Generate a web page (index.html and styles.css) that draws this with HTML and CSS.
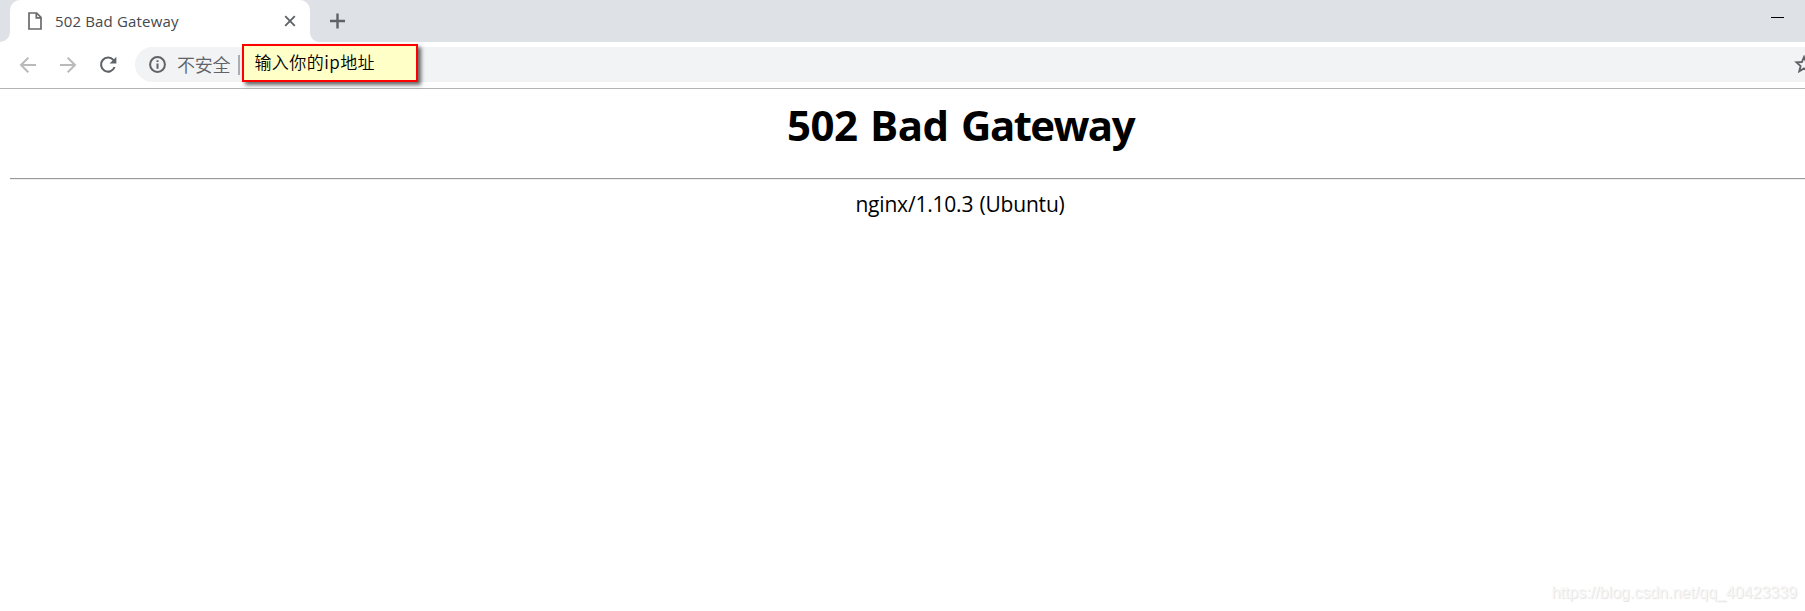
FILE: index.html
```html
<!DOCTYPE html>
<html lang="zh-CN">
<head>
<meta charset="utf-8">
<title>502 Bad Gateway</title>
<link rel="stylesheet" href="styles.css">
</head>
<body>
<header class="tabstrip">
  <div class="tab">
    <svg class="file-icon" width="14" height="18" viewBox="0 0 14 18" fill="none" stroke="#6a6a6a" stroke-width="1.7"><path d="M1 1H8.6L13 5.4V17H1ZM8.3 1V5.8H13"/></svg>
    <span class="tab-title">502 Bad Gateway</span>
    <svg class="tab-close" width="12" height="12" viewBox="0 0 12 12" stroke="#5f6368" stroke-width="1.9"><path d="M1.2 1.2L10.8 10.8M10.8 1.2L1.2 10.8"/></svg>
  </div>
  <svg class="tab-curve" width="10" height="10" viewBox="0 0 10 10"><path d="M0 0C0 6 4 10 10 10H0Z" fill="#fff"/></svg>
  <svg class="new-tab" width="15" height="16" viewBox="0 0 15 16" stroke="#5f6368" stroke-width="2.4"><path d="M7.5 .5V15.5M0 8H15"/></svg>
  <span class="minimize"></span>
</header>
<nav class="toolbar">
  <svg class="nav-icon" width="18" height="18" viewBox="0 0 18 18" fill="none" stroke="#bababa" stroke-width="2"><path d="M17 9H2.5M9.3 1.7L2 9L9.3 16.3"/></svg>
  <svg class="nav-icon" width="18" height="18" viewBox="0 0 18 18" fill="none" stroke="#bababa" stroke-width="2"><path d="M1 9H15.5M8.7 1.7L16 9L8.7 16.3"/></svg>
  <svg class="nav-icon" width="18" height="18" viewBox="0 0 18 18"><path d="M14.5 4.2A7 7 0 1 0 15.6 11" fill="none" stroke="#5f6368" stroke-width="2.1"/><path d="M17.4 .7V7.5H10.6Z" fill="#5f6368"/></svg>
  <div class="omnibox">
    <svg class="info-icon" width="17" height="17" viewBox="0 0 17 17"><circle cx="8.5" cy="8.5" r="7.4" fill="none" stroke="#5f6368" stroke-width="2"/><path d="M7.5 4.2H9.5V6.1H7.5ZM7.5 7.4H9.5V12.7H7.5Z" fill="#5f6368"/></svg>
    <span class="security">不安全</span>
    <span class="divider"></span>
    <div class="note">输入你的ip地址</div>
    <svg class="star" width="11" height="19" viewBox="0 0 11 19"><path d="M10 2L12.1 7L17.5 7.4L13.4 11L14.7 16.3L10 13.4L5.3 16.3L6.6 11L2.5 7.4L7.9 7Z" fill="none" stroke="#5f6368" stroke-width="1.9"/></svg>
  </div>
</nav>
<main class="page">
  <h1 class="title">502 Bad <span class="title-end">Gateway</span></h1>
  <hr class="rule">
  <p class="server">nginx/1.10.3 (Ubuntu)</p>
</main>
<div class="watermark">https://blog.csdn.net/qq_40423339</div>
</body>
</html>
```
FILE: styles.css
```css
* { box-sizing: border-box; }
body {
  margin: 0;
  height: 611px;
  overflow: hidden;
  background: #fff;
  font-family: "Open Sans", "Noto Sans CJK SC", sans-serif;
  display: flex;
  flex-direction: column;
  position: relative;
}
.tabstrip {
  height: 42px;
  flex: none;
  display: flex;
  background: linear-gradient(#fff, #fff) 0 100% / 10px 10px no-repeat, #dee1e6;
}
.tabstrip::before {
  content: "";
  width: 10px;
  height: 42px;
  background: #dee1e6;
  border-bottom-right-radius: 10px;
}
.tab {
  width: 300px;
  height: 42px;
  padding: 0 14px 0 18px;
  display: flex;
  align-items: center;
  background: #fff;
  border-radius: 10px 10px 0 0;
}
.file-icon { margin-right: 13px; }
.tab-title {
  font-size: 15px;
  line-height: 20px;
  letter-spacing: .16px;
  color: #45484c;
  white-space: nowrap;
}
.tab-close { margin-left: auto; }
.tab-curve { align-self: flex-end; }
.new-tab { margin: 13px 0 0 10px; }
.minimize {
  width: 13px;
  height: 1px;
  margin: 17px 21px 0 auto;
  background: #000;
}
.toolbar {
  height: 47px;
  flex: none;
  padding: 5px 0 6px 19px;
  border-bottom: 1px solid #b4b4b4;
  display: flex;
  align-items: center;
}
.nav-icon { flex: none; margin-right: 22px; }
.nav-icon:nth-of-type(3) { margin-right: 18px; }
.omnibox {
  height: 35px;
  flex: 1;
  padding-left: 14px;
  display: flex;
  align-items: center;
  background: #f1f3f4;
  border-radius: 18px 0 0 18px;
}
.info-icon { margin-right: 11px; }
.security {
  margin-top: -2px;
  font: 350 18px/24px "Noto Sans CJK SC", sans-serif;
  letter-spacing: -.2px;
  color: #5f6368;
}
.divider {
  width: 2px;
  height: 20px;
  margin-left: 8px;
  background: #aaadb1;
}
.note {
  width: 176px;
  height: 38px;
  margin: -4px 0 -1px 2px;
  padding-left: 10px;
  border: 2px solid #f00;
  background: #ffffc8;
  box-shadow: 3px 3px 4px rgba(0, 0, 0, .6);
  font: 350 17px/32px "Noto Sans CJK SC", sans-serif;
  letter-spacing: .45px;
  color: #000;
  white-space: nowrap;
}
.star { margin-left: auto; flex: none; }
.page {
  margin-left: 10px;
  text-align: center;
  color: #000;
}
.title {
  margin: 7px 0 0;
  padding-left: 106px;
  font-size: 42px;
  line-height: 58px;
  font-weight: 700;
  letter-spacing: -.5px;
  word-spacing: 2px;
}
.title-end { letter-spacing: -1.6px; }
.rule {
  height: 2px;
  margin: 24px 0 0;
  border: 0;
  border-top: 1px solid #9a9a9a;
  border-bottom: 1px solid #eee;
}
.server {
  margin: 10px 0 0;
  padding-left: 105px;
  font-size: 21px;
  line-height: 28px;
  letter-spacing: -.2px;
  word-spacing: 1px;
}
.watermark {
  position: absolute;
  right: 8px;
  bottom: 8px;
  font: 16px/20px "Liberation Sans", sans-serif;
  color: #f7f7f7;
  text-shadow: 1px 1px 1px #e0e0e0;
}
```
